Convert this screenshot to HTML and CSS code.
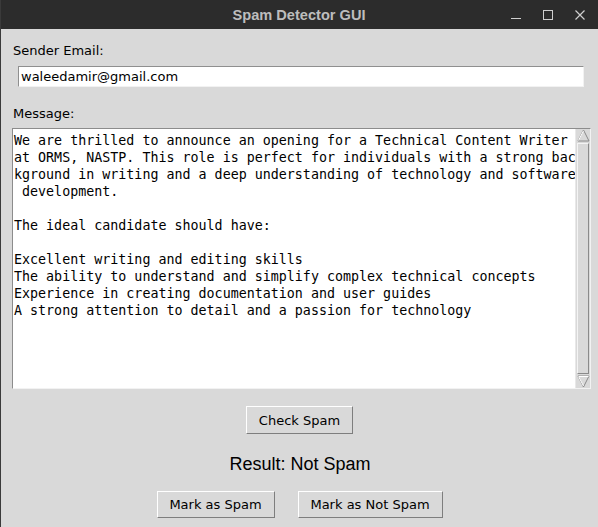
FILE: index.html
```html
<!DOCTYPE html>
<html>
<head>
<meta charset="utf-8">
<title>Spam Detector GUI</title>
<link rel="stylesheet" href="styles.css">
</head>
<body>
<div class="window">
  <header class="titlebar">
    <div class="tb-side"></div>
    <div class="tb-title">Spam Detector GUI</div>
    <div class="tb-side tb-controls">
      <svg class="ctl" width="12" height="12" viewBox="0 0 12 12"><line x1="1" y1="9.5" x2="11" y2="9.5" stroke="#cfcfcf" stroke-width="1"/></svg>
      <svg class="ctl" width="12" height="12" viewBox="0 0 12 12"><rect x="1.5" y="1.5" width="9" height="9" fill="none" stroke="#cfcfcf" stroke-width="1"/></svg>
      <svg class="ctl" width="12" height="12" viewBox="0 0 12 12"><path d="M1.5 1.5 L10.5 10.5 M10.5 1.5 L1.5 10.5" stroke="#cfcfcf" stroke-width="1.2"/></svg>
    </div>
  </header>
  <main class="content">
    <div class="label first">Sender Email:</div>
    <div class="entry">waleedamir@gmail.com</div>
    <div class="label second">Message:</div>
    <div class="textbox">
      <div class="text">We are thrilled to announce an opening for a Technical Content Writer 
at ORMS, NASTP. This role is perfect for individuals with a strong bac
kground in writing and a deep understanding of technology and software
 development.

The ideal candidate should have:

Excellent writing and editing skills
The ability to understand and simplify complex technical concepts
Experience in creating documentation and user guides
A strong attention to detail and a passion for technology</div>
      <div class="scrollbar">
        <svg class="arrow" width="13" height="13" viewBox="0 0 13 13">
          <polygon points="6.5,1 12,12 1,12" fill="#d9d9d9" stroke="#8a8a8a" stroke-width="1"/>
          <polyline points="1.5,11.5 6.5,1.8" fill="none" stroke="#ffffff" stroke-width="1"/>
        </svg>
        <div class="slider"></div>
        <svg class="arrow" width="13" height="13" viewBox="0 0 13 13">
          <polygon points="1,1 12,1 6.5,12" fill="#d9d9d9" stroke="#8a8a8a" stroke-width="1"/>
          <polyline points="1.5,1.5 11.5,1.5" fill="none" stroke="#ffffff" stroke-width="1"/>
          <polyline points="1.8,2 6.5,11" fill="none" stroke="#ffffff" stroke-width="1"/>
        </svg>
      </div>
    </div>
    <div class="row check-row"><button class="btn">Check Spam</button></div>
    <div class="result">Result: Not Spam</div>
    <div class="row mark-row">
      <button class="btn">Mark as Spam</button>
      <button class="btn">Mark as Not Spam</button>
    </div>
  </main>
</div>
</body>
</html>
```

FILE: styles.css
```css
html, body {
  margin: 0;
  padding: 0;
  background: #d9d9d9;
}
.window {
  width: 598px;
  height: 527px;
  display: flex;
  flex-direction: column;
  background: #d9d9d9;
  border-left: 1px solid #3a3a3a;
  box-sizing: border-box;
  overflow: hidden;
  font-family: "DejaVu Sans", sans-serif;
  font-size: 13px;
  color: #000;
}
.titlebar {
  height: 29px;
  flex: none;
  background: #2c2c2c;
  display: grid;
  grid-template-columns: 1fr auto 1fr;
  align-items: center;
  margin-left: -1px;
}
.tb-title {
  font-family: "Liberation Sans", sans-serif;
  font-weight: bold;
  font-size: 14.6px;
  color: #bdbdbd;
  padding-top: 1px;
}
.tb-controls {
  display: flex;
  justify-content: flex-end;
  gap: 20px;
  padding-right: 12px;
}
.ctl { display: block; margin-top: 1px; }
.content {
  display: flex;
  flex-direction: column;
  flex: 1;
}
.label {
  line-height: 15px;
  margin-left: 12px;
}
.label.first { margin-top: 14px; }
.label.second { margin-top: 19px; }
.entry {
  margin: 8px 14px 0 17px;
  height: 21px;
  box-sizing: border-box;
  background: #fff;
  border: 1px solid;
  border-color: #8f8f8f #f2f2f2 #f2f2f2 #8f8f8f;
  padding: 2px 2px 0 2px;
  line-height: 15px;
  font-size: 13px;
}
.textbox {
  margin: 7px 7px 0 11px;
  height: 261px;
  box-sizing: border-box;
  display: flex;
  background: #fff;
  border: 1px solid;
  border-color: #8c8c8c #f2f2f2 #f2f2f2 #8c8c8c;
}
.text {
  flex: 1;
  white-space: pre;
  font-family: "DejaVu Sans Mono", monospace;
  font-size: 13.33px;
  line-height: 17px;
  padding: 3px 0 0 1px;
  overflow: hidden;
  color: #000;
}
.scrollbar {
  width: 14px;
  flex: none;
  display: flex;
  flex-direction: column;
  align-items: center;
  background: #d9d9d9;
  border-left: 1px solid #e8e8e8;
}
.arrow { display: block; flex: none; }
.slider {
  flex: 1;
  width: 12px;
  box-sizing: border-box;
  border: 1px solid;
  border-color: #f4f4f4 #8a8a8a #8a8a8a #f4f4f4;
  margin: 1px 0;
}
.row {
  display: flex;
  justify-content: center;
}
.check-row { margin-top: 17px; }
.btn {
  font-family: "DejaVu Sans", sans-serif;
  font-size: 13px;
  color: #000;
  background: #d9d9d9;
  border: 1px solid;
  border-color: #ffffff #7e7e7e #7e7e7e #ffffff;
  border-radius: 0;
  padding: 0;
  height: 28px;
  line-height: 15px;
  margin: 0;
  white-space: nowrap;
  text-align: center;
}
.check-row .btn { width: 107px; }
.result {
  font-family: "Liberation Sans", sans-serif;
  font-size: 18px;
  line-height: 21px;
  text-align: center;
  margin-top: 20px;
  padding-left: 1px;
}
.mark-row {
  margin-top: 16px;
  gap: 23px;
}
.mark-row .btn { height: 27px; }
.mark-row .btn:first-child { width: 118px; }
.mark-row .btn:last-child { width: 145px; }
```
